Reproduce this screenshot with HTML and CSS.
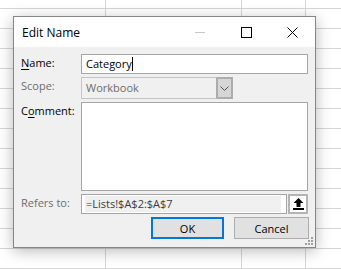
FILE: index.html
```
<!DOCTYPE html>
<html lang="en">
<head>
    <meta charset="UTF-8">
    <meta name="viewport" content="width=device-width, initial-scale=1.0">
    <title>Edit Name</title>
    <link rel="stylesheet" href="styles.css">
</head>
<body>

    <div class="dialog">
        <div class="titlebar">
            <span class="title">Edit Name</span>
            <div class="caption">
                <span class="cap-btn">
                    <svg width="10" height="10" viewBox="0 0 10 10"><path d="M0 5.5H10" stroke="#c8c8c8" stroke-width="1"/></svg>
                </span>
                <span class="cap-btn">
                    <svg width="11" height="11" viewBox="0 0 11 11"><rect x="0.5" y="0.5" width="10" height="10" fill="none" stroke="#000" stroke-width="1"/></svg>
                </span>
                <span class="cap-btn">
                    <svg width="11" height="11" viewBox="0 0 11 11"><path d="M0.5 0.5L10.5 10.5M10.5 0.5L0.5 10.5" stroke="#000" stroke-width="1"/></svg>
                </span>
            </div>
        </div>

        <div class="content">
            <div class="form">
                <label class="lbl"><u>N</u>ame:</label>
                <div class="field">Category<span class="caret"></span></div>

                <label class="lbl disabled">Scope:</label>
                <div class="select">
                    <span class="select-val">Workbook</span>
                    <span class="select-btn">
                        <svg width="9" height="5" viewBox="0 0 9 5"><path d="M0.5 0.5L4.5 4.5L8.5 0.5" fill="none" stroke="#555" stroke-width="1"/></svg>
                    </span>
                </div>

                <label class="lbl">C<u>o</u>mment:</label>
                <div class="field area"></div>

                <label class="lbl disabled">Refers to:</label>
                <div class="refers">
                    <div class="ref-input"><span class="ref-text">=Lists!$A$2:$A$7</span></div>
                    <span class="ref-btn">
                        <svg width="11" height="12" viewBox="0 0 11 12"><path d="M5.5 0L10.5 5H7.5V9H3.5V5H0.5Z" fill="#000"/><rect x="0" y="10" width="11" height="2" fill="#000"/></svg>
                    </span>
                </div>
            </div>

            <div class="buttons">
                <button class="btn default">OK</button>
                <button class="btn">Cancel</button>
            </div>
        </div>

        <svg class="grip" width="9" height="9" viewBox="0 0 9 9">
            <rect x="6" y="0" width="2" height="2" fill="#a0a0a0"/>
            <rect x="3" y="3" width="2" height="2" fill="#a0a0a0"/>
            <rect x="6" y="3" width="2" height="2" fill="#a0a0a0"/>
            <rect x="0" y="6" width="2" height="2" fill="#a0a0a0"/>
            <rect x="3" y="6" width="2" height="2" fill="#a0a0a0"/>
            <rect x="6" y="6" width="2" height="2" fill="#a0a0a0"/>
        </svg>
    </div>

</body>
</html>
```

FILE: styles.css
```
html, body {
    margin: 0;
    padding: 0;
}

body {
    width: 341px;
    height: 269px;
    overflow: hidden;
    font-family: "Segoe UI", "Open Sans", sans-serif;
    font-size: 11px;
    background-color: #fff;
    background-image:
        linear-gradient(to right, transparent 105px, #d6d6d6 105px 106px, transparent 106px 241px, #d6d6d6 241px 242px, transparent 242px 305px, #d6d6d6 305px 306px, transparent 306px),
        repeating-linear-gradient(to bottom, transparent 0 8px, #d6d6d6 8px 9px, transparent 9px 20px);
}

/* the dialog is a window floating over the sheet */
.dialog {
    position: absolute;
    left: 13px;
    top: 16px;
    width: 301px;
    border: 1px solid #858585;
    background: #f0f0f0;
    box-shadow: 0 3px 14px rgba(0, 0, 0, 0.28);
}

.titlebar {
    height: 30px;
    display: flex;
    align-items: center;
    background: #fff;
}

.title {
    padding-left: 8px;
    font-size: 12px;
    color: #000;
    flex: 1;
}

.caption {
    display: flex;
    height: 30px;
}

.cap-btn {
    width: 46px;
    display: flex;
    align-items: center;
    justify-content: center;
}

.content {
    padding: 7px 6px 8px 7px;
}

.form {
    display: grid;
    grid-template-columns: 60px 227px;
    grid-template-rows: 20px 22px 89px 20px;
    row-gap: 3px;
}

.lbl {
    line-height: 17px;
    color: #000;
}

.lbl.disabled {
    color: #6d6d6d;
}

.lbl u {
    text-decoration-thickness: 1px;
    text-underline-offset: 2px;
}

.field {
    box-sizing: border-box;
    background: #fff;
    border: 1px solid #a5a5a5;
    padding: 0 4px;
    line-height: 18px;
    display: flex;
    align-items: center;
}

.field.area {
    align-items: flex-start;
}

.caret {
    width: 1px;
    height: 14px;
    background: #000;
}

.select {
    box-sizing: border-box;
    width: 152px;
    display: flex;
    border: 1px solid #c4c4c4;
    background: #f0f0f0;
}

.select-val {
    flex: 1;
    padding-left: 4px;
    line-height: 20px;
    color: #6d6d6d;
}

.select-btn {
    box-sizing: border-box;
    width: 17px;
    margin: -1px -1px -1px 0;
    border: 2px solid #acacac;
    background: #d6d6d6;
    display: flex;
    align-items: center;
    justify-content: center;
}

.refers {
    display: flex;
    gap: 1px;
}

.ref-input {
    box-sizing: border-box;
    flex: 1;
    display: flex;
    border: 1px solid #a5a5a5;
    background: #fff;
    padding: 1px 5px 1px 3px;
}

.ref-text {
    flex: 1;
    background: #f0f0f0;
    color: #3c3c3c;
    line-height: 16px;
    padding-left: 1px;
}

.ref-btn {
    box-sizing: border-box;
    width: 20px;
    border: 2px solid #b4b4b4;
    background: #fff;
    display: flex;
    align-items: center;
    justify-content: center;
}

.buttons {
    display: flex;
    justify-content: flex-end;
    gap: 10px;
    margin-top: 3px;
}

.btn {
    box-sizing: border-box;
    height: 22px;
    width: 75px;
    padding: 0;
    font-family: inherit;
    font-size: 11px;
    color: #000;
    background: #e1e1e1;
    border: 1px solid #adadad;
}

.btn.default {
    width: 73px;
    border: 2px solid #0078d7;
}

.grip {
    position: absolute;
    right: 1px;
    bottom: 1px;
}
```
